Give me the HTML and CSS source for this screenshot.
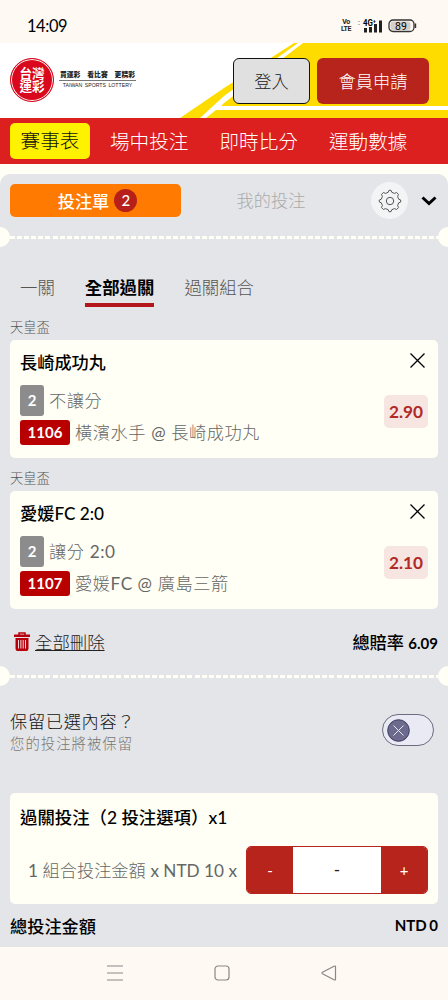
FILE: index.html
```html
<!DOCTYPE html>
<html lang="zh-Hant">
<head>
  <meta charset="UTF-8" />
  <meta name="viewport" content="width=device-width, initial-scale=1.0"/>
  <title>台灣運彩</title>
  <link rel="stylesheet" href="styles.css">
</head>
<body>
  <!-- Status bar -->
  <div class="status-bar">
    <span class="clock">14:09</span>
    <div class="status-icons">
      <span class="volte">Vo<br>LTE</span>
      <svg class="signal" width="26" height="16" viewBox="0 0 26 16">
        <text x="5" y="8" font-size="8.5" font-weight="700" textLength="13" lengthAdjust="spacingAndGlyphs">4G⁺</text>
        <path d="M7.500 10v4.500M12.500 9v5.500M17.500 6v8.500M22.500 2.500v12" stroke="#222" stroke-width="3" fill="none"/>
        <path d="M0 3.500h2M0 6.500h2" stroke="#bbb"/>
      </svg>
      <svg class="battery" width="29" height="14" viewBox="0 0 29 14">
        <rect x="1" y="1" width="25" height="11.500" rx="4" fill="none" stroke="#333" stroke-width="1.300"/>
        <rect x="2.500" y="2.500" width="20" height="8.500" rx="2.500" fill="#d3d0cc"/>
        <path d="M27.500 4.500v4.500" stroke="#333" stroke-width="1.400"/>
        <text x="13" y="10.500" font-size="10.500" text-anchor="middle">89</text>
      </svg>
    </div>
  </div>

  <!-- Header -->
  <div class="header">
    <svg class="header-bg" width="448" height="75" viewBox="0 0 448 75">
      <path d="M180 75L224 45L294 0H448V75Z" fill="#ffdc00"/>
      <path d="M200 75L224 53L298 0H303L224 60L221 63H448V67H216L206 75Z" fill="#fff"/>
    </svg>
    <div class="logo">
      <div class="seal">台灣<br>運彩</div>
      <div class="slogan">
        <div class="slogan-zh"><span>買運彩</span><span>看比賽</span><span>更精彩</span></div>
        <div class="slogan-en">TAIWAN SPORTS LOTTERY</div>
      </div>
    </div>
    <div class="header-buttons">
      <button class="btn login">登入</button>
      <button class="btn join">會員申請</button>
    </div>
  </div>

  <div class="nav">
    <a class="active">賽事表</a>
    <a>場中投注</a>
    <a>即時比分</a>
    <a>運動數據</a>
  </div>

  <!-- Bet slip -->
  <div class="slip">
    <div class="slip-head">
      <div class="slip-tab current">投注單 <span class="count">2</span></div>
      <div class="slip-tab">我的投注</div>
      <div class="gear">
        <svg width="24" height="24" viewBox="0 0 24 24" fill="none" stroke="#555" stroke-width="1" stroke-linejoin="round">
          <path d="M10.200 3.300L11 1.300H13L13.800 3.300L16.500 4.400L18.600 3.500L20.500 5.400L19.600 7.500L20.700 10.200L22.700 11V13L20.700 13.800L19.600 16.500L20.500 18.600L18.600 20.500L16.500 19.600L13.800 20.700L13 22.700H11L10.200 20.700L7.500 19.600L5.400 20.500L3.500 18.600L4.400 16.500L3.300 13.800L1.300 13V11L3.300 10.200L4.400 7.500L3.500 5.400L5.400 3.500L7.500 4.400Z"/>
          <circle cx="12" cy="12" r="3.700"/>
        </svg>
      </div>
      <svg class="chevron" width="16" height="10" viewBox="0 0 16 10" fill="none" stroke="#000" stroke-width="3">
        <path d="M1.500 1.500L8 7.500L14.500 1.500"/>
      </svg>
    </div>

    <div class="tear"></div>

    <div class="modes">
      <span>一關</span>
      <span class="selected">全部過關</span>
      <span>過關組合</span>
    </div>

    <div class="league">天皇盃</div>
    <div class="card bet">
      <div class="bet-info">
        <div class="bet-title">長崎成功丸</div>
        <div class="bet-row"><span class="tag gray">2</span><span class="bet-text">不讓分</span></div>
        <div class="bet-row"><span class="tag red">1106</span><span class="bet-text">橫濱水手 <i>@</i> 長崎成功丸</span></div>
      </div>
      <div class="bet-side">
        <svg width="15" height="15" viewBox="0 0 15 15" stroke="#000" stroke-width="1.300"><path d="M.5.5L14.500 14.500M14.500.5L.5 14.500"/></svg>
        <span class="odds">2.90</span>
      </div>
    </div>

    <div class="league">天皇盃</div>
    <div class="card bet">
      <div class="bet-info">
        <div class="bet-title">愛媛FC 2:0</div>
        <div class="bet-row"><span class="tag gray">2</span><span class="bet-text">讓分 <i>2:0</i></span></div>
        <div class="bet-row"><span class="tag red">1107</span><span class="bet-text">愛媛<i>FC @</i> 廣島三箭</span></div>
      </div>
      <div class="bet-side">
        <svg width="15" height="15" viewBox="0 0 15 15" stroke="#000" stroke-width="1.300"><path d="M.5.5L14.500 14.500M14.500.5L.5 14.500"/></svg>
        <span class="odds">2.10</span>
      </div>
    </div>

    <div class="summary">
      <svg width="16" height="19" viewBox="0 0 16 19">
        <path d="M5 3V1H11V3" fill="none" stroke="#b8000c" stroke-width="1.500"/>
        <path d="M0 2.500H16V5H0ZM1.500 6H14.500V16.500Q14.500 19 12.500 19H3.500Q1.500 19 1.500 16.500Z" fill="#b8000c"/>
        <path d="M4.500 8V16.500M6.900 8V16.500M9.200 8V16.500M11.500 8V16.500" stroke="#f3d9da" stroke-width="1"/>
      </svg>
      <a class="delete-all">全部刪除</a>
      <span class="total-odds">總賠率 <b>6.09</b></span>
    </div>

    <div class="tear"></div>

    <div class="keep">
      <div>
        <div class="keep-title">保留已選內容？</div>
        <div class="keep-note">您的投注將被保留</div>
      </div>
      <div class="toggle">
        <svg width="23" height="23" viewBox="0 0 23 23">
          <circle cx="11.500" cy="11.500" r="10.800" fill="#6d6b8d" stroke="#3e3c62" stroke-width="1"/>
          <path d="M6.500 6.500L16.500 16.500M16.500 6.500L6.500 16.500" stroke="#e8e8f2" stroke-width="1"/>
        </svg>
      </div>
    </div>

    <div class="card stake">
      <div class="stake-title">過關投注（2 投注選項）x1</div>
      <div class="stake-row">
        <span class="stake-label"><i>1</i> 組合投注金額 <i>x NTD 10 x</i></span>
        <div class="stepper">
          <button>-</button>
          <span class="amount">-</span>
          <button>+</button>
        </div>
      </div>
    </div>

    <div class="total">
      <span>總投注金額</span>
      <span class="money">NTD 0</span>
    </div>
  </div>

  <!-- System navigation -->
  <div class="system-nav">
    <svg width="16" height="16" viewBox="0 0 16 16"><path d="M0 1H16M0 8H16M0 15H16"/></svg>
    <svg width="16" height="16" viewBox="0 0 16 16"><rect x="1" y="1" width="14" height="14" rx="3"/></svg>
    <svg width="16" height="16" viewBox="0 0 16 16"><path d="M14.500 2V14Q14.500 15.500 13 14.700L1.500 8.700Q.5 8 1.500 7.300L13 1.300Q14.500.5 14.500 2Z"/></svg>
  </div>
</body>
</html>
```
FILE: styles.css
```css
* {
  box-sizing: border-box;
}

body {
  margin: 0;
  width: 448px;
  height: 1000px;
  overflow: hidden;
  display: flex;
  flex-direction: column;
  font-family: Lato, "Noto Sans CJK TC", sans-serif;
  font-size: 17.2px;
  background-color: #fffff5;
  color: #222;
}

svg {
  display: block;
  flex: none;
}

button {
  font-family: inherit;
  padding: 0;
}

/* latin parts inside the light chinese text */
i {
  font-style: normal;
  font-weight: 400;
}

/* status bar */
.status-bar {
  height: 43px;
  flex: none;
  display: flex;
  justify-content: space-between;
  padding: 8px 31px 0 27px;
  align-items: center;
  background-color: #fef9f3;
}

.clock {
  font-size: 16.4px;
  letter-spacing: -0.4px;
  color: #000;
}

.status-icons {
  display: flex;
  align-items: center;
  font-family: Roboto, sans-serif;
}

.volte {
  width: 12px;
  font-size: 7px;
  line-height: 7px;
  letter-spacing: -0.5px;
  font-weight: 700;
  text-align: center;
  margin-right: 6px;
}

.battery {
  margin-left: 4px;
}

/* header */
.header {
  position: relative;
  height: 75px;
  flex: none;
  display: flex;
  justify-content: space-between;
  padding: 15px 19px 0 10px;
  background-color: #fff;
}

.header-bg {
  position: absolute;
  left: 0;
  top: 0;
}

.logo, .header-buttons {
  position: relative;
  display: flex;
}

.seal {
  width: 44px;
  height: 44px;
  padding-top: 8px;
  border-radius: 50%;
  border: 1.5px solid #d9081c;
  box-shadow: inset 0 0 0 1px #fff;
  background-color: #d9081c;
  color: #fff;
  font-size: 12.6px;
  line-height: 13px;
  font-weight: 700;
  text-align: center;
}

.slogan {
  width: 77px;
  margin: 10px 0 0 5px;
}

.slogan-zh {
  display: flex;
  justify-content: space-between;
  padding: 0 1px;
  border-bottom: 1px solid #777;
  font-size: 6.8px;
  font-weight: 900;
  line-height: 12px;
  font-family: "Noto Sans CJK TC", sans-serif;
}

.slogan-en {
  font-family: "Liberation Sans", sans-serif;
  font-size: 5.2px;
  line-height: 9px;
  text-align: center;
  white-space: nowrap;
  word-spacing: 1px;
}

.btn {
  height: 46px;
  padding-bottom: 2px;
  border-radius: 6px;
  font-size: 17.2px;
  font-weight: 300;
}

.login {
  width: 77px;
  background-color: #e0e0e0;
  border: 1.5px solid #111;
  color: #222;
  margin-right: 7px;
}

.join {
  width: 112px;
  background-color: #b7241b;
  border: none;
  color: #fff;
}

.nav {
  height: 46px;
  flex: none;
  display: flex;
  align-items: center;
  padding-left: 10px;
  background-color: #dc1f1f;
  color: #fff;
  font-size: 19.6px;
  font-weight: 300;
}

.nav a {
  width: 79px;
  margin-right: 30.5px;
  padding-bottom: 2px;
  white-space: nowrap;
}

.nav a.active {
  width: 80px;
  height: 36px;
  line-height: 35px;
  margin-right: 20px;
  text-align: center;
  border-radius: 5px;
  background-color: #fff200;
  color: #111;
}

/* bet slip */
.slip {
  margin-top: 10px;
  height: 773px;
  flex: none;
  border-radius: 10px 10px 0 0;
  background-color: #e4e5e8;
}

.slip-head {
  height: 53px;
  display: flex;
  align-items: center;
  padding-left: 10px;
}

.slip-tab {
  width: 171px;
  padding-bottom: 2px;
  text-align: center;
  font-weight: 300;
  color: #aaa;
}

.slip-tab.current {
  display: flex;
  align-items: center;
  justify-content: center;
  gap: 5px;
  height: 33px;
  padding: 0 0 1px 4px;
  border-radius: 5px;
  background-color: #ff7a00;
  color: #fff;
  font-weight: 500;
}

.count {
  width: 23px;
  height: 23px;
  line-height: 22px;
  border-radius: 50%;
  background-color: #b7201a;
  font-size: 15px;
}

.slip-tab + .slip-tab {
  width: 180px;
}

.gear {
  width: 37px;
  height: 37px;
  margin-left: 10px;
  display: flex;
  align-items: center;
  justify-content: center;
  border-radius: 50%;
  background-color: #f3f4f6;
}

.chevron {
  margin-left: 13px;
}

/* dashed line with a notch at both ends */
.tear {
  display: flex;
  align-items: center;
  justify-content: space-between;
  height: 20px;
  background: repeating-linear-gradient(90deg, #fffff5 0 5px, transparent 5px 7.1px) 10px 9px / 428px 3px no-repeat;
}

.tear::before, .tear::after {
  content: "";
  width: 10px;
  height: 20px;
  background-color: #fffff5;
}

.tear::before {
  border-radius: 0 10px 10px 0;
}

.tear::after {
  border-radius: 10px 0 0 10px;
}

.modes {
  display: flex;
  gap: 30px;
  padding: 24px 20px 0;
  font-size: 17.4px;
  font-weight: 300;
  color: #555;
}

.modes span {
  height: 36px;
  line-height: 34px;
}

.modes .selected {
  border-bottom: 4px solid #b3161c;
  font-weight: 700;
  color: #000;
}

.league {
  height: 33px;
  padding: 11px 10px 0;
  line-height: 18px;
  font-size: 13.3px;
  font-weight: 300;
  color: #555;
}

.card {
  margin: 0 10px;
  border-radius: 5px;
  background-color: #fffff5;
}

.bet {
  height: 118px;
  display: flex;
  justify-content: space-between;
  padding: 10px;
}

.bet-title {
  height: 34px;
  line-height: 25px;
  font-weight: 500;
  color: #000;
}

.bet-row {
  display: flex;
  align-items: center;
  height: 32px;
}

.bet-text {
  padding-bottom: 2px;
  letter-spacing: 0.55px;
  font-weight: 300;
  color: #666;
}

.tag {
  display: flex;
  align-items: center;
  justify-content: center;
  margin-right: 5px;
  border-radius: 3px;
  color: #fff;
  font-size: 15px;
  font-weight: 700;
}

.gray {
  width: 24px;
  height: 31px;
  background-color: #8c8c8c;
}

.red {
  width: 50px;
  height: 25px;
  background-color: #b80000;
}

.bet-side {
  display: flex;
  flex-direction: column;
  align-items: flex-end;
  gap: 27px;
}

.bet-side svg {
  margin: 3px 3px 0 0;
}

.odds {
  width: 44px;
  height: 33px;
  line-height: 33px;
  text-align: center;
  border-radius: 5px;
  background-color: #f7e5e1;
  color: #b12a26;
  font-weight: 700;
}

.summary {
  display: flex;
  align-items: center;
  height: 57px;
  padding: 8px 10px 0 14px;
}

.delete-all {
  margin-left: 5px;
  padding-bottom: 1px;
  font-size: 17.4px;
  font-weight: 300;
  text-decoration: underline;
}

.total-odds {
  margin-left: auto;
  font-weight: 500;
  color: #000;
}

.total-odds b {
  font-size: 15px;
}

.keep {
  display: flex;
  justify-content: space-between;
  padding: 24px 14px 0 10px;
  height: 107px;
  font-weight: 300;
}

.keep-title {
  line-height: 24px;
  letter-spacing: 0.7px;
  color: #111;
}

.keep-note {
  line-height: 20px;
  font-size: 14.4px;
  letter-spacing: 1px;
  color: #777;
}

.toggle {
  width: 52px;
  height: 32px;
  margin-top: 4px;
  padding: 3.5px 4px;
  border: 1px solid #6d6b80;
  border-radius: 16px;
  background-color: #e9eaf3;
}

.stake {
  height: 111px;
  padding: 12px 10px 0;
}

.stake-title {
  line-height: 26px;
  font-size: 17.4px;
  font-weight: 500;
  color: #000;
}

.stake-row {
  display: flex;
  align-items: center;
  justify-content: flex-end;
  margin-top: 15px;
}

.stake-label {
  margin-right: 9px;
  padding-bottom: 2px;
  font-weight: 300;
  color: #666;
  white-space: nowrap;
}

.stepper {
  display: flex;
  width: 182px;
  height: 48px;
  overflow: hidden;
  border: 1px solid #b7241b;
  border-radius: 5px;
  background-color: #fff;
}

.stepper button {
  width: 46px;
  border: none;
  background-color: #b7241b;
  color: #fff;
  font-size: 15px;
}

.amount {
  flex: 1;
  line-height: 46px;
  text-align: center;
}

.total {
  display: flex;
  justify-content: space-between;
  align-items: center;
  height: 40px;
  padding: 2px 10px 0;
  font-weight: 500;
  color: #000;
}

.money {
  font-size: 15px;
  font-weight: 700;
  word-spacing: -1px;
}

/* system navigation */
.system-nav {
  flex: 1;
  display: flex;
  justify-content: center;
  align-items: center;
  gap: 91px;
  padding: 0 4px 2px 0;
  background-color: #fef9f3;
}

.system-nav svg {
  fill: none;
  stroke: #888;
  stroke-width: 1.2;
}
```
